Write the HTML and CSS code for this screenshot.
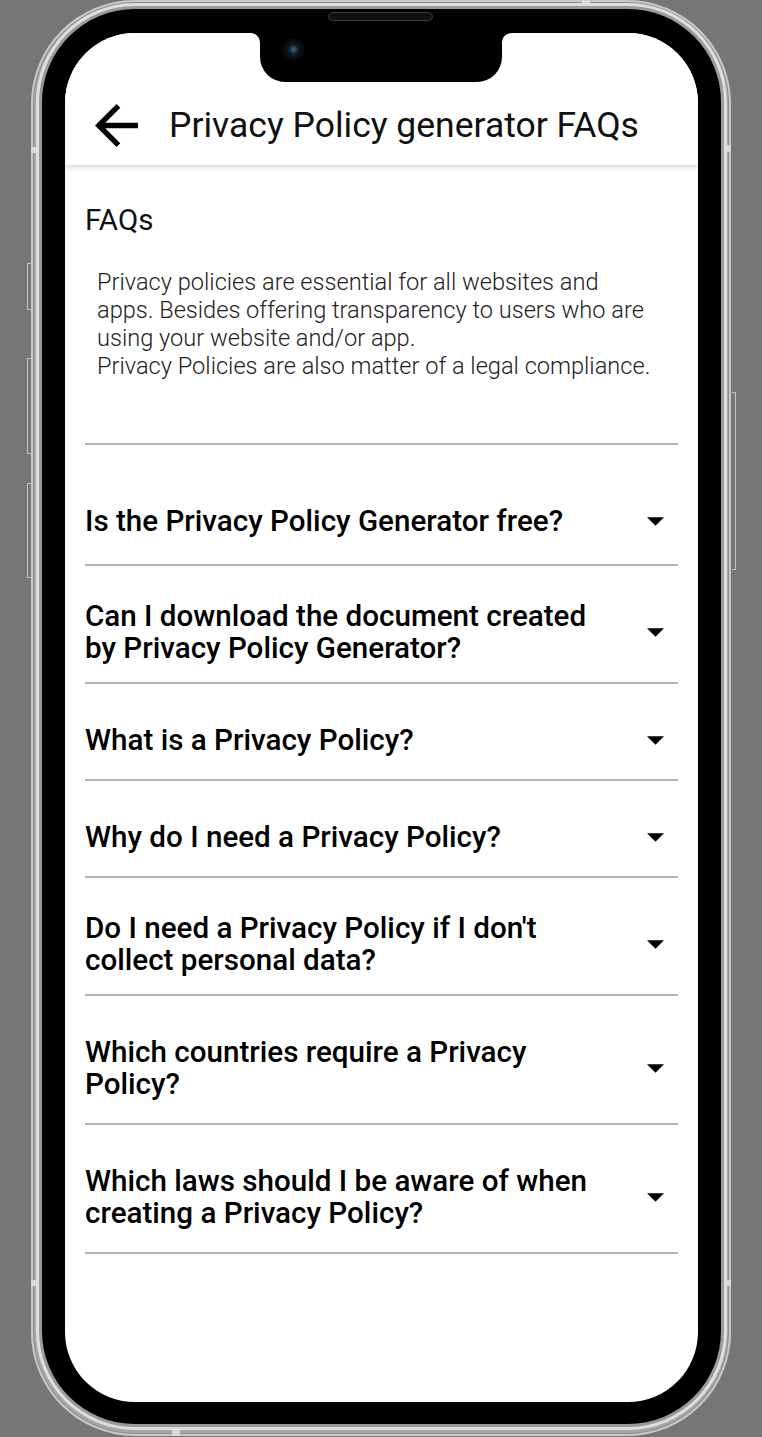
FILE: index.html
```html
<!DOCTYPE html>
<html lang="en">
<head>
<meta charset="utf-8">
<title>Privacy Policy generator FAQs</title>
<link rel="stylesheet" href="styles.css">
</head>
<body>
<div class="stage">
  <div class="phone">
    <span class="side-btn side-btn--l1"></span>
    <span class="side-btn side-btn--l2"></span>
    <span class="side-btn side-btn--l3"></span>
    <span class="side-btn side-btn--r1"></span>
    <span class="band band--left-top"></span>
    <span class="band band--left-bottom"></span>
    <span class="band band--right-top"></span>
    <span class="band band--right-bottom"></span>
    <span class="band band--top"></span>
    <span class="band band--bottom"></span>
    <div class="bezel">
      <span class="speaker"></span>
      <div class="screen">
        <div class="notch">
          <svg class="notch__shape" viewBox="0 0 262 49" aria-hidden="true"><path d="M0 0H262C256 0 252 4 252 10V24A25 25 0 0 1 227 49H35A25 25 0 0 1 10 24V10C10 4 6 0 0 0Z"/></svg>
          <span class="camera"></span>
        </div>
        <header class="appbar">
          <button class="back" aria-label="Back">
            <svg viewBox="4 4 16 16" aria-hidden="true"><path d="M20 11H7.83l5.59-5.59L12 4l-8 8 8 8 1.41-1.41L7.830 13H20v-2z"/></svg>
          </button>
          <h1 class="appbar__title">Privacy Policy generator FAQs</h1>
        </header>
        <main class="content">
          <section class="intro">
            <h2 class="intro__title">FAQs</h2>
            <p class="intro__text">Privacy policies are essential for all websites and apps. Besides offering transparency to users who are using your website and/or app.<br>Privacy Policies are also matter of a legal compliance.</p>
          </section>
          <ul class="faq-list">
            <li class="faq-item"><span class="faq-q">Is the Privacy Policy Generator free?</span><svg class="caret" viewBox="7 10 10 5" aria-hidden="true"><path d="M7 10l5 5 5-5z"/></svg></li>
            <li class="faq-item faq-item--compact"><span class="faq-q">Can I download the document created by Privacy Policy Generator?</span><svg class="caret" viewBox="7 10 10 5" aria-hidden="true"><path d="M7 10l5 5 5-5z"/></svg></li>
            <li class="faq-item"><span class="faq-q">What is a Privacy Policy?</span><svg class="caret" viewBox="7 10 10 5" aria-hidden="true"><path d="M7 10l5 5 5-5z"/></svg></li>
            <li class="faq-item"><span class="faq-q">Why do I need a Privacy Policy?</span><svg class="caret" viewBox="7 10 10 5" aria-hidden="true"><path d="M7 10l5 5 5-5z"/></svg></li>
            <li class="faq-item faq-item--compact"><span class="faq-q">Do I need a Privacy Policy if I don't collect personal data?</span><svg class="caret" viewBox="7 10 10 5" aria-hidden="true"><path d="M7 10l5 5 5-5z"/></svg></li>
            <li class="faq-item"><span class="faq-q">Which countries require a Privacy Policy?</span><svg class="caret" viewBox="7 10 10 5" aria-hidden="true"><path d="M7 10l5 5 5-5z"/></svg></li>
            <li class="faq-item"><span class="faq-q">Which laws should I be aware of when creating a Privacy Policy?</span><svg class="caret" viewBox="7 10 10 5" aria-hidden="true"><path d="M7 10l5 5 5-5z"/></svg></li>
          </ul>
        </main>
      </div>
    </div>
  </div>
</div>
</body>
</html>
```

FILE: styles.css
```css
* { box-sizing: border-box; }

html, body {
  margin: 0;
  padding: 0;
}

body {
  background: #767676;
  font-family: Roboto, "Noto Sans", "Liberation Sans", sans-serif;
}

.stage {
  display: flex;
  justify-content: center;
  height: 1437px;
  overflow: hidden;
}

.phone {
  position: relative;
  width: 700px;
  height: 1436px;
  padding: 9px 10px 12px 11px;
  border-radius: 104px;
  background: #a6a6a6;
  box-shadow: inset 0 0 0 2px #c8c8c8, inset 0 0 0 3px #8c8c8c;
}

.side-btn {
  position: absolute;
  width: 4px;
  border: 1px solid #c4c4c4;
}

.side-btn--l1, .side-btn--l2, .side-btn--l3 { left: -4px; border-right: 0; }
.side-btn--l1 { top: 263px; height: 47px; }
.side-btn--l2 { top: 358px; height: 96px; }
.side-btn--l3 { top: 483px; height: 95px; }
.side-btn--r1 { right: -5px; top: 392px; height: 178px; border-left: 0; }

.band {
  position: absolute;
  background: #d9d9d9;
  z-index: 1;
}

.band--left-top { left: 0; top: 147px; width: 11px; height: 6px; }
.band--left-bottom { left: 0; top: 1280px; width: 11px; height: 6px; }
.band--right-top { right: 0; top: 145px; width: 10px; height: 7px; }
.band--right-bottom { right: 0; top: 1280px; width: 10px; height: 6px; }
.band--top { top: 0; left: 551px; width: 8px; height: 9px; }
.band--bottom { bottom: 0; left: 141px; width: 8px; height: 12px; }

.bezel {
  position: relative;
  height: 100%;
  padding: 24px 23px 22px 23px;
  border-radius: 93px;
  background: #000;
  box-shadow: 0 0 0 3px #9a9a9a, 0 0 0 6px #dedede;
  z-index: 2;
}

.speaker {
  position: absolute;
  left: 286px;
  top: 3px;
  width: 105px;
  height: 9px;
  border-radius: 5px;
  background: #101010;
  border: 1px solid #3a3a3a;
}

.screen {
  position: relative;
  height: 100%;
  display: flex;
  flex-direction: column;
  background: #fff;
  border-radius: 70px;
  overflow: hidden;
}

.notch {
  position: absolute;
  top: 0;
  left: 185px;
  width: 262px;
  height: 49px;
  z-index: 3;
}

.notch__shape {
  display: block;
  width: 262px;
  height: 49px;
  fill: #000;
}

.camera {
  position: absolute;
  left: 32px;
  top: 5px;
  width: 23px;
  height: 23px;
  border-radius: 50%;
  background: radial-gradient(circle at 50% 50%, #3a6a8c 0, #22425c 2.5px, #121c26 5px, #0b0e12 8px, #050505 11.5px);
}

.appbar {
  position: relative;
  z-index: 2;
  flex-shrink: 0;
  display: flex;
  align-items: center;
  height: 132px;
  padding-top: 52px;
  background: #fff;
  box-shadow: 0 2px 5px rgba(0, 0, 0, 0.18);
}

.back {
  display: flex;
  width: 43px;
  height: 43px;
  margin: 0 31px 0 30px;
  padding: 0;
  border: 0;
  background: none;
}

.back svg {
  width: 43px;
  height: 43px;
  fill: #000;
}

.appbar__title {
  margin: 0;
  font-size: 35.5px;
  font-weight: 400;
  line-height: 40px;
  color: #111;
  white-space: nowrap;
}

.content {
  flex: 1;
  padding: 0 20px;
}

.intro {
  padding: 39px 0 63px;
  border-bottom: 2px solid #b5b5b5;
}

.intro__title {
  margin: 0;
  font-size: 29.5px;
  font-weight: 400;
  line-height: 33px;
  color: #111;
}

.intro__text {
  margin: 31px 0 0;
  padding: 0 18px 0 12px;
  font-size: 23.6px;
  font-weight: 300;
  line-height: 28px;
  color: #222;
}

.faq-list {
  list-style: none;
  margin: 0;
  padding: 20px 0 0;
}

.faq-item {
  display: flex;
  align-items: center;
  padding: 40px 0 23px;
  border-bottom: 2px solid #b5b5b5;
}

.faq-item:first-child {
  padding-bottom: 27px;
}

.faq-item--compact {
  padding: 34px 0 18px;
}

.faq-q {
  flex: 1;
  margin-right: 41px;
  font-size: 29.6px;
  font-weight: 500;
  line-height: 32px;
  color: #000;
}

.caret {
  flex-shrink: 0;
  width: 17px;
  height: 9px;
  margin-right: 14px;
  fill: #000;
}
```
